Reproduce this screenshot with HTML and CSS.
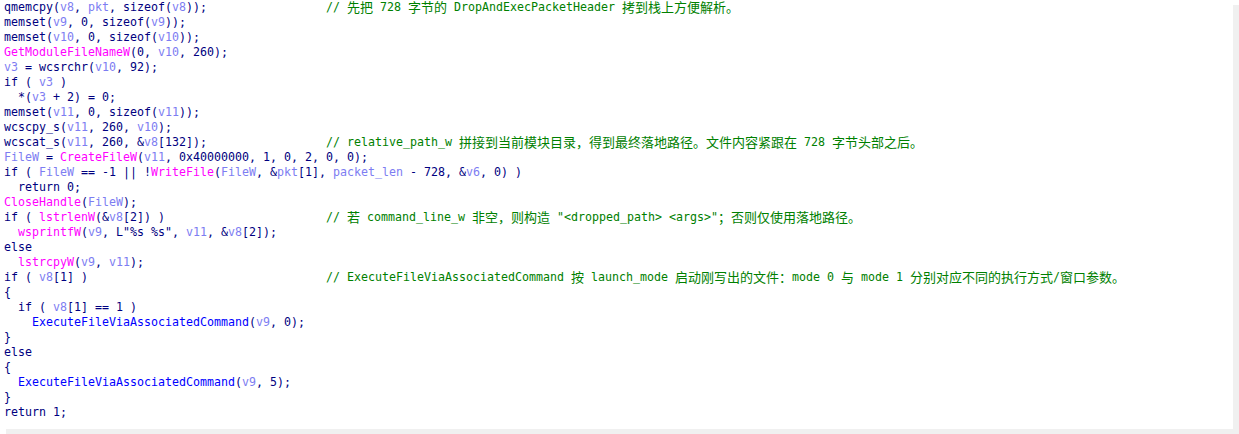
FILE: index.html
```html
<!DOCTYPE html>
<html lang="zh-CN">
<head>
<meta charset="utf-8">
<title>Pseudocode</title>
<link rel="stylesheet" href="styles.css">
</head>
<body>
<div class="frame">
  <div class="code">
    <div class="line"><span class="src">qmemcpy(<span class="v">v8</span>, <span class="v">pkt</span>, sizeof(<span class="v">v8</span>));</span><span class="c">// <span class="z">先把</span> 728 <span class="z">字节的</span> DropAndExecPacketHeader <span class="z">拷到栈上方便解析。</span></span></div>
    <div class="line">memset(<span class="v">v9</span>, 0, sizeof(<span class="v">v9</span>));</div>
    <div class="line">memset(<span class="v">v10</span>, 0, sizeof(<span class="v">v10</span>));</div>
    <div class="line"><span class="f">GetModuleFileNameW</span>(0, <span class="v">v10</span>, 260);</div>
    <div class="line"><span class="v">v3</span> = wcsrchr(<span class="v">v10</span>, 92);</div>
    <div class="line">if ( <span class="v">v3</span> )</div>
    <div class="line">  *(<span class="v">v3</span> + 2) = 0;</div>
    <div class="line">memset(<span class="v">v11</span>, 0, sizeof(<span class="v">v11</span>));</div>
    <div class="line">wcscpy_s(<span class="v">v11</span>, 260, <span class="v">v10</span>);</div>
    <div class="line"><span class="src">wcscat_s(<span class="v">v11</span>, 260, &amp;<span class="v">v8</span>[132]);</span><span class="c">// relative_path_w <span class="z">拼接到当前模块目录，得到最终落地路径。文件内容紧跟在</span> 728 <span class="z">字节头部之后。</span></span></div>
    <div class="line"><span class="v">FileW</span> = <span class="f">CreateFileW</span>(<span class="v">v11</span>, 0x40000000, 1, 0, 2, 0, 0);</div>
    <div class="line">if ( <span class="v">FileW</span> == -1 || !<span class="f">WriteFile</span>(<span class="v">FileW</span>, &amp;<span class="v">pkt</span>[1], <span class="v">packet_len</span> - 728, &amp;<span class="v">v6</span>, 0) )</div>
    <div class="line">  return 0;</div>
    <div class="line"><span class="f">CloseHandle</span>(<span class="v">FileW</span>);</div>
    <div class="line"><span class="src">if ( <span class="f">lstrlenW</span>(&amp;<span class="v">v8</span>[2]) )</span><span class="c">// <span class="z">若</span> command_line_w <span class="z">非空，则构造</span> "&lt;dropped_path&gt; &lt;args&gt;"<span class="z">；否则仅使用落地路径。</span></span></div>
    <div class="line">  <span class="f">wsprintfW</span>(<span class="v">v9</span>, L"%s %s", <span class="v">v11</span>, &amp;<span class="v">v8</span>[2]);</div>
    <div class="line">else</div>
    <div class="line">  <span class="f">lstrcpyW</span>(<span class="v">v9</span>, <span class="v">v11</span>);</div>
    <div class="line"><span class="src">if ( <span class="v">v8</span>[1] )</span><span class="c">// ExecuteFileViaAssociatedCommand <span class="z">按</span> launch_mode <span class="z">启动刚写出的文件：</span>mode 0 <span class="z">与</span> mode 1 <span class="z">分别对应不同的执行方式</span>/<span class="z">窗口参数。</span></span></div>
    <div class="line">{</div>
    <div class="line">  if ( <span class="v">v8</span>[1] == 1 )</div>
    <div class="line">    <span class="u">ExecuteFileViaAssociatedCommand</span>(<span class="v">v9</span>, 0);</div>
    <div class="line">}</div>
    <div class="line">else</div>
    <div class="line">{</div>
    <div class="line">  <span class="u">ExecuteFileViaAssociatedCommand</span>(<span class="v">v9</span>, 5);</div>
    <div class="line">}</div>
    <div class="line">return 1;</div>
  </div>
  <div class="vbar"></div>
  <div class="hbar"></div>
</div>
</body>
</html>
```
FILE: styles.css
```css
html, body {
  margin: 0;
  padding: 0;
  background: #ffffff;
}

.frame {
  width: 1239px;
  height: 434px;
  display: grid;
  grid-template-columns: 1fr 6px;
  grid-template-rows: 1fr 5px;
  overflow: hidden;
}

.code {
  grid-column: 1;
  grid-row: 1;
  padding: 0 0 0 4px;
  font-family: "DejaVu Sans Mono", "Noto Sans CJK SC", monospace;
  font-size: 11.63px;
  line-height: 15px;
  color: #000080;
}

.line {
  display: block;
  height: 15px;
  white-space: pre;
}

.src {
  display: inline-block;
  width: 46ch;
  white-space: pre;
  vertical-align: top;
}

.v { color: #7d7df2; }
.f { color: #ff00ff; }
.u { color: #0000ff; }
.c { color: #008000; white-space: pre; }

.z {
  font-family: "Noto Sans CJK SC", sans-serif;
  font-size: 13px;
  line-height: 13px;
  vertical-align: -1px;
}

.vbar {
  grid-column: 2;
  grid-row: 1;
  margin-top: 5px;
  background: #f0f0f0;
}

.hbar {
  grid-column: 1 / 3;
  grid-row: 2;
  margin-left: 6px;
  background: #f0f0f0;
}
```
